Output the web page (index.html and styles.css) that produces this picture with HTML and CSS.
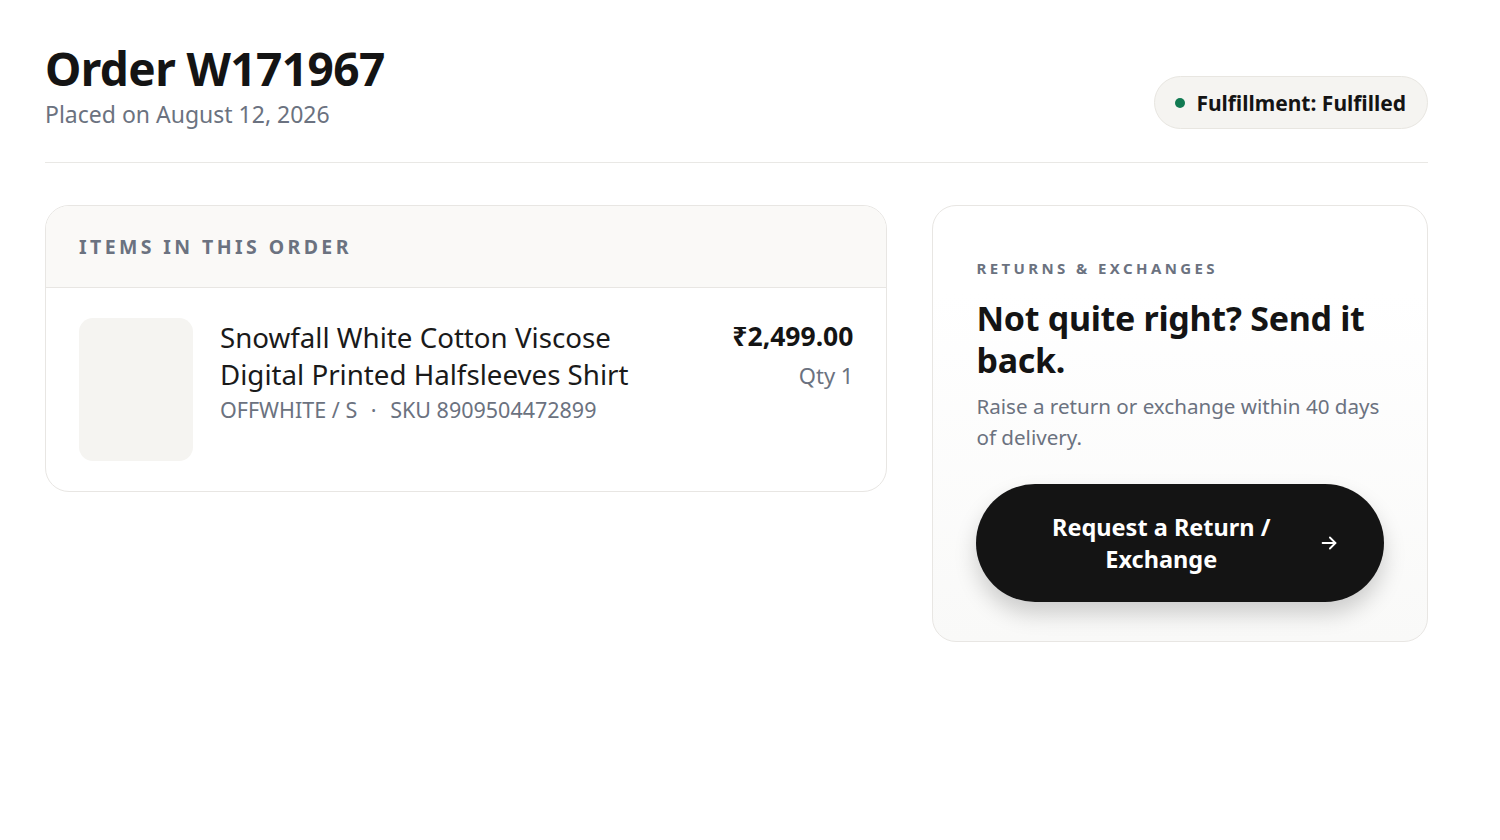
FILE: index.html
```html
<!DOCTYPE html>
<html lang="en">
<head>
  <meta charset="UTF-8" />
  <meta name="viewport" content="width=device-width, initial-scale=1.0" />
  <title>Order W171967</title>
  <link rel="stylesheet" href="styles.css">
</head>
<body>
  <main class="order-page">
    <header class="order-header">
      <div class="order-title">
        <h1>Order W171967</h1>
        <p class="order-date">Placed on August 12, 2026</p>
      </div>
      <div class="status-badge">
        <span class="status-dot"></span>
        Fulfillment: Fulfilled
      </div>
    </header>

    <div class="order-grid">
      <section class="items-card">
        <div class="items-head">Items in this order</div>
        <div class="item-row">
          <div class="item-thumb"></div>
          <div class="item-info">
            <div class="item-name">Snowfall White Cotton Viscose Digital Printed Halfsleeves Shirt</div>
            <div class="item-meta">OFFWHITE / S <span class="sep">·</span> SKU 8909504472899</div>
          </div>
          <div class="item-price">
            <div class="price">₹2,499.00</div>
            <div class="qty">Qty 1</div>
          </div>
        </div>
      </section>

      <aside class="returns-card">
        <div class="eyebrow">Returns &amp; Exchanges</div>
        <h2>Not quite right? Send it back.</h2>
        <p class="returns-text">Raise a return or exchange within 40 days of delivery.</p>
        <button class="return-btn" type="button">
          <span class="btn-label">Request a Return / Exchange</span>
          <svg class="btn-arrow" width="22" height="22" viewBox="0 0 24 24" fill="none" stroke="currentColor" stroke-width="2" stroke-linecap="round" stroke-linejoin="round">
            <path d="M5 12h14" />
            <path d="M13 6l6 6-6 6" />
          </svg>
        </button>
      </aside>
    </div>
  </main>
</body>
</html>
```

FILE: styles.css
```css
body {
  font-family: 'Noto Sans', 'Open Sans', sans-serif;
  background: #fff;
  color: #141414;
  margin: 0;
  padding: 0;
}

.order-page {
  padding: 40px 72px 40px 45px;
}

/* HEADER */
.order-header {
  display: flex;
  justify-content: space-between;
  align-items: flex-end;
  padding-bottom: 31px;
  border-bottom: 1px solid #e9e8e5;
}

.order-header h1 {
  margin: 0;
  font-size: 46px;
  font-weight: 700;
  line-height: 56px;
  letter-spacing: -0.6px;
}

.order-date {
  margin: 1px 0 0;
  font-size: 23px;
  line-height: 34px;
  color: #6b7280;
}

.status-badge {
  display: flex;
  align-items: center;
  gap: 11px;
  height: 51px;
  margin-bottom: 2px;
  padding: 0 21px 0 20px;
  border: 1px solid #e8e6e1;
  border-radius: 999px;
  background: #f5f4f1;
  font-size: 21px;
  font-weight: 700;
  color: #141414;
}

.status-dot {
  width: 10px;
  height: 10px;
  border-radius: 50%;
  background: #117a52;
}

/* GRID */
.order-grid {
  display: grid;
  grid-template-columns: 1.7fr 1fr;
  gap: 45px;
  align-items: start;
  margin-top: 42px;
}

/* ITEMS */
.items-card {
  border: 1px solid #e8e6e3;
  border-radius: 24px;
  overflow: hidden;
}

.items-head {
  padding: 0 33px;
  height: 81px;
  display: flex;
  align-items: center;
  background: #faf9f7;
  border-bottom: 1px solid #e8e6e3;
  font-size: 19.5px;
  font-weight: 700;
  letter-spacing: 3.4px;
  text-transform: uppercase;
  color: #6b7280;
}

.item-row {
  display: flex;
  align-items: flex-start;
  gap: 27px;
  padding: 30px 33px 30px 33px;
}

.item-thumb {
  flex: none;
  width: 114px;
  height: 143px;
  border-radius: 14px;
  background: #f5f4f1;
}

.item-info {
  flex: 1;
  max-width: 440px;
  padding-top: 1px;
}

.item-name {
  font-size: 27.7px;
  line-height: 37px;
  color: #1a1a1a;
}

.item-meta {
  font-size: 21.5px;
  line-height: 34px;
  color: #6b7280;
}

.item-meta .sep {
  margin: 0 8px;
}

.item-price {
  margin-left: auto;
  text-align: right;
}

.price {
  font-size: 26.5px;
  font-weight: 700;
  line-height: 37px;
}

.qty {
  font-size: 22px;
  line-height: 40px;
  color: #6b7280;
}

/* RETURNS */
.returns-card {
  padding: 52px 43px 39px 43px;
  border: 1px solid #e8e6e3;
  border-radius: 24px;
  background: linear-gradient(180deg, #ffffff 20%, #f9f9f8 100%);
}

.eyebrow {
  font-size: 15px;
  font-weight: 700;
  line-height: 20px;
  letter-spacing: 3.4px;
  text-transform: uppercase;
  color: #6b7280;
}

.returns-card h2 {
  margin: 19px 0 0;
  font-size: 34px;
  font-weight: 700;
  line-height: 42px;
  letter-spacing: -0.3px;
}

.returns-text {
  margin: 10px 0 0;
  font-size: 20.6px;
  line-height: 31px;
  color: #6b7280;
}

.return-btn {
  display: flex;
  align-items: center;
  gap: 18px;
  width: 100%;
  margin-top: 31px;
  padding: 27px 44px 27px 46px;
  border: none;
  border-radius: 999px;
  background: #141414;
  color: #fff;
  font-family: inherit;
  font-size: 23.5px;
  font-weight: 700;
  line-height: 32px;
  box-shadow: 0 12px 22px rgba(0, 0, 0, 0.18);
  cursor: pointer;
}

.btn-label {
  flex: 1;
  text-align: center;
  padding: 0 10px;
}

.btn-arrow {
  flex: none;
}
```
